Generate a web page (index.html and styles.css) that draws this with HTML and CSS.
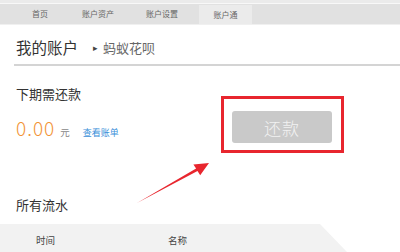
FILE: index.html
```html
<!DOCTYPE html>
<html lang="zh-CN">
<head>
    <meta charset="UTF-8">
    <title>我的账户 - 蚂蚁花呗</title>
    <link rel="stylesheet" href="styles.css">
</head>
<body>
    <div class="page">
        <div class="topline"></div>
        <div class="tabs">
            <div class="tab tab-home">首页</div>
            <div class="tab tab-assets">账户资产</div>
            <div class="tab tab-settings">账户设置</div>
            <div class="tab tab-pass active">账户通</div>
        </div>

        <div class="content">
            <div class="title-row">
                <span class="title">我的账户</span>
                <span class="crumb-arrow">▸</span>
                <span class="crumb">蚂蚁花呗</span>
            </div>
            <div class="divider"></div>

            <div class="due">
                <div class="due-info">
                    <div class="label">下期需还款</div>
                    <div class="amount-row">
                        <span class="amount">0.00</span>
                        <span class="unit">元</span>
                        <a class="bill-link">查看账单</a>
                    </div>
                </div>
                <div class="highlight">
                    <button class="repay-btn" disabled>还款</button>
                </div>
            </div>

            <div class="label flow-title">所有流水</div>
        </div>

        <div class="table-head">
            <span class="col-time">时间</span>
            <span class="col-name">名称</span>
        </div>

        <!-- 标注箭头 -->
        <svg class="arrow" width="400" height="252" viewBox="0 0 400 252">
            <polygon points="137,203 196.1,168.5 193.4,164.4 209,163 200.2,175.2 197.5,171.1" fill="#e8262e"/>
        </svg>
    </div>
</body>
</html>
```

FILE: styles.css
```css
body {
    margin: 0;
    font-family: "Noto Sans CJK SC", "Liberation Sans", sans-serif;
    background: #fff;
    color: #333;
}
.page {
    position: relative;
    width: 400px;
    height: 252px;
    overflow: hidden;
}
.topline {
    height: 3px;
    background: #ebebeb;
    border-bottom: 1px solid #f8f8f8;
}
.tabs {
    display: flex;
    height: 20px;
    padding-left: 9px;
    background: #e1e1e1;
    border-bottom: 1px solid #f0f0f0;
}
.tab {
    font-size: 8px;
    line-height: 20px;
    color: #666;
    text-align: center;
}
.tab-home { width: 62px; }
.tab-assets { width: 54px; }
.tab-settings { width: 74px; }
.tab-pass { width: 53px; }
.tab.active {
    margin-top: 1px;
    line-height: 19px;
    background: #ebebeb;
}
.content {
    padding: 0 0 0 16px;
}
.title-row {
    display: flex;
    align-items: center;
    height: 20px;
    margin-top: 12px;
}
.title {
    font-size: 15.5px;
    color: #333;
}
.crumb-arrow {
    margin-left: 15px;
    font-size: 9px;
    color: #444;
}
.crumb {
    margin-left: 5px;
    font-size: 13px;
    color: #666;
}
.divider {
    height: 2px;
    margin: 7px 0 0 -2px;
    background: #d4d4d4;
}
.due {
    display: flex;
    align-items: flex-start;
    margin-top: 19px;
}
.due-info {
    width: 205px;
}
.label {
    font-size: 13px;
    line-height: 18px;
    color: #333;
}
.amount-row {
    display: flex;
    align-items: baseline;
    height: 24px;
    margin-top: 11px;
}
.amount {
    font-family: "Noto Sans CJK SC", sans-serif;
    font-size: 19px;
    font-weight: 300;
    letter-spacing: 1px;
    color: #f29437;
}
.unit {
    margin-left: 5px;
    font-size: 9.5px;
    color: #888;
}
.bill-link {
    margin-left: 13px;
    font-size: 9px;
    color: #3a8fd9;
}
.highlight {
    margin-top: 11px;
    padding: 12px 9px 7px 8px;
    border: 3px solid #e8262e;
}
.repay-btn {
    display: block;
    width: 100px;
    height: 32px;
    border: none;
    border-radius: 3px;
    background: #c9c9c9;
    color: #f2f2f2;
    font-family: "Noto Sans CJK SC", sans-serif;
    font-size: 17px;
    font-weight: 300;
    letter-spacing: 1px;
}
.flow-title {
    margin-top: 43px;
}
.table-head {
    display: flex;
    height: 28px;
    margin-top: 10px;
    padding: 7px 0 0 36px;
    box-sizing: border-box;
    background: #f2f2f2;
    clip-path: polygon(0 0, 320px 0, 347px 28px, 0 28px);
    font-size: 9.5px;
    line-height: 18px;
    color: #444;
}
.col-time {
    width: 132px;
}
.arrow {
    position: absolute;
    left: 0;
    top: 0;
}
```
